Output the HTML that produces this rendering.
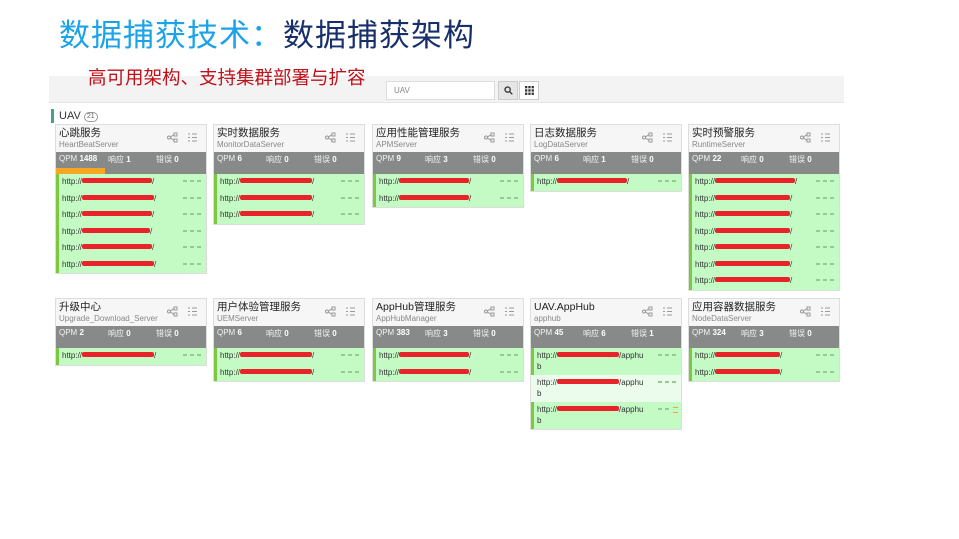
<!DOCTYPE html>
<html><head><meta charset="utf-8"><style>
*{margin:0;padding:0;box-sizing:border-box}
body{width:959px;height:539px;background:#fff;position:relative;overflow:hidden;font-family:"Liberation Sans","Noto Sans CJK SC",sans-serif}
.t1{position:absolute;left:59px;top:10px;font-size:31px;color:#1aa3e8;letter-spacing:1px;white-space:nowrap}
.t1 b{font-weight:normal;color:#17306b}
.t2{position:absolute;left:88px;top:64px;font-size:18.5px;color:#c0101a;white-space:nowrap;z-index:2}
.bar{position:absolute;left:49px;top:76px;width:795px;height:27px;background:#f3f3f3;border-bottom:1px solid #e6e6e6}
.search{position:absolute;left:386px;top:81px;width:109px;height:19px;background:#fff;border:1px solid #ddd;font-size:8px;color:#888;padding:4px 7px}
.btn{position:absolute;top:81px;width:20px;height:19px;border:1px solid #ccc;background:#fff}
.btn svg{position:absolute;left:5px;top:4px}
.uav{position:absolute;left:51px;top:109px;border-left:3px solid #4a9e8e;padding-left:5px;font-size:11px;color:#333;height:14px;line-height:14px}
.uav span{display:inline-block;border:1px solid #999;border-radius:6px;font-size:7px;line-height:8px;padding:0 2px;color:#666;vertical-align:1px}
.card{position:absolute;width:152px;border:1px solid #ddd;background:#fff}
.hd{height:27px;background:#f6f6f6;position:relative;padding:2px 0 0 3px}
.hd .n{font-size:10.5px;color:#222;line-height:13px;white-space:nowrap}
.hd .s{font-size:8px;color:#888;line-height:10px}
.ic{position:absolute;top:7px;width:11px;height:11px}
.st{height:22px;background:#888a89;position:relative;font-size:8px;color:#f2f2f2;padding:2px 0 0 3px}
.st i{font-style:normal;position:absolute;top:2px}
.st b{color:#fff}
.ob{position:absolute;left:0;bottom:0;height:6px;background:#f5a623}
.r{height:16.5px;background:#c4fac4;border-left:3px solid #7cc840;position:relative;font-size:8px;color:#333;padding:3px 0 0 3px;white-space:nowrap}
.r.l{background:#ecfcec;border-left-color:#ecfcec}
.r.tall{height:27px;line-height:11px;padding-top:2px}
.red{display:inline-block;height:5px;background:#e8242a;border-radius:2px;vertical-align:1px}
.d{position:absolute;right:3px;top:6px;width:20px;height:2px;background:repeating-linear-gradient(90deg,#8fce8f 0 4px,transparent 4px 7px)}
.d.o{background:repeating-linear-gradient(90deg,#8fce8f 0 4px,transparent 4px 7px);width:14px;right:9px}
.d.o:after{content:"";position:absolute;left:15px;top:-1px;width:5px;height:4px;border-top:1px solid #f5a623;border-bottom:1px solid #f5a623}
</style></head><body>
<div class="t1">数据捕获技术：<b>数据捕获架构</b></div>
<div class="bar"></div>
<div class="t2">高可用架构、支持集群部署与扩容</div>
<div class="search">UAV</div>
<div class="btn" style="left:498px;background:#e6e6e6"><svg width="9" height="9" viewBox="0 0 9 9" fill="none" stroke="#333" stroke-width="1.3"><circle cx="3.6" cy="3.6" r="2.6"/><path d="M5.5 5.5L8.3 8.3"/></svg></div>
<div class="btn" style="left:519px"><svg width="9" height="9" viewBox="0 0 9 9" fill="#333"><rect x="0" y="0" width="2.3" height="2.3"/><rect x="3.3" y="0" width="2.3" height="2.3"/><rect x="6.6" y="0" width="2.3" height="2.3"/><rect x="0" y="3.3" width="2.3" height="2.3"/><rect x="3.3" y="3.3" width="2.3" height="2.3"/><rect x="6.6" y="3.3" width="2.3" height="2.3"/><rect x="0" y="6.6" width="2.3" height="2.3"/><rect x="3.3" y="6.6" width="2.3" height="2.3"/><rect x="6.6" y="6.6" width="2.3" height="2.3"/></svg></div>
<div class="uav">UAV <span>21</span></div>

<div class="card" style="left:55px;top:124px">
<div class="hd"><div class="n">心跳服务</div><div class="s">HeartBeatServer</div>
<svg class="ic" style="left:111px" viewBox="0 0 11 11" fill="none" stroke="#999"><circle cx="2" cy="5.5" r="1.5"/><rect x="7" y="1" width="3" height="3"/><rect x="7" y="7" width="3" height="3"/><path d="M3.5 5L7 2.5M3.5 6L7 8.5"/></svg>
<svg class="ic" style="left:131px" viewBox="0 0 11 11" fill="none" stroke="#999"><path d="M1 2h2M5 2h5M1 5.5h2M5 5.5h5M1 9h2M5 9h5"/></svg></div>
<div class="st">QPM <b>1488</b><i style="left:52px">响应 <b>1</b></i><i style="left:100px">错误 <b>0</b></i><div class="ob" style="width:49px"></div></div>
<div class="r">http://<span class="red" style="width:70px"></span>/<span class="d"></span></div>
<div class="r">http://<span class="red" style="width:72px"></span>/<span class="d"></span></div>
<div class="r">http://<span class="red" style="width:70px"></span>/<span class="d"></span></div>
<div class="r">http://<span class="red" style="width:68px"></span>/<span class="d"></span></div>
<div class="r">http://<span class="red" style="width:70px"></span>/<span class="d"></span></div>
<div class="r">http://<span class="red" style="width:72px"></span>/<span class="d"></span></div>
</div>

<div class="card" style="left:213px;top:124px">
<div class="hd"><div class="n">实时数据服务</div><div class="s">MonitorDataServer</div>
<svg class="ic" style="left:111px" viewBox="0 0 11 11" fill="none" stroke="#999"><circle cx="2" cy="5.5" r="1.5"/><rect x="7" y="1" width="3" height="3"/><rect x="7" y="7" width="3" height="3"/><path d="M3.5 5L7 2.5M3.5 6L7 8.5"/></svg>
<svg class="ic" style="left:131px" viewBox="0 0 11 11" fill="none" stroke="#999"><path d="M1 2h2M5 2h5M1 5.5h2M5 5.5h5M1 9h2M5 9h5"/></svg></div>
<div class="st">QPM <b>6</b><i style="left:52px">响应 <b>0</b></i><i style="left:100px">错误 <b>0</b></i></div>
<div class="r">http://<span class="red" style="width:72px"></span>/<span class="d"></span></div>
<div class="r">http://<span class="red" style="width:72px"></span>/<span class="d"></span></div>
<div class="r">http://<span class="red" style="width:72px"></span>/<span class="d"></span></div>
</div>

<div class="card" style="left:372px;top:124px">
<div class="hd"><div class="n">应用性能管理服务</div><div class="s">APMServer</div>
<svg class="ic" style="left:111px" viewBox="0 0 11 11" fill="none" stroke="#999"><circle cx="2" cy="5.5" r="1.5"/><rect x="7" y="1" width="3" height="3"/><rect x="7" y="7" width="3" height="3"/><path d="M3.5 5L7 2.5M3.5 6L7 8.5"/></svg>
<svg class="ic" style="left:131px" viewBox="0 0 11 11" fill="none" stroke="#999"><path d="M1 2h2M5 2h5M1 5.5h2M5 5.5h5M1 9h2M5 9h5"/></svg></div>
<div class="st">QPM <b>9</b><i style="left:52px">响应 <b>3</b></i><i style="left:100px">错误 <b>0</b></i></div>
<div class="r">http://<span class="red" style="width:70px"></span>/<span class="d"></span></div>
<div class="r">http://<span class="red" style="width:70px"></span>/<span class="d"></span></div>
</div>

<div class="card" style="left:530px;top:124px">
<div class="hd"><div class="n">日志数据服务</div><div class="s">LogDataServer</div>
<svg class="ic" style="left:111px" viewBox="0 0 11 11" fill="none" stroke="#999"><circle cx="2" cy="5.5" r="1.5"/><rect x="7" y="1" width="3" height="3"/><rect x="7" y="7" width="3" height="3"/><path d="M3.5 5L7 2.5M3.5 6L7 8.5"/></svg>
<svg class="ic" style="left:131px" viewBox="0 0 11 11" fill="none" stroke="#999"><path d="M1 2h2M5 2h5M1 5.5h2M5 5.5h5M1 9h2M5 9h5"/></svg></div>
<div class="st">QPM <b>6</b><i style="left:52px">响应 <b>1</b></i><i style="left:100px">错误 <b>0</b></i></div>
<div class="r">http://<span class="red" style="width:70px"></span>/<span class="d"></span></div>
</div>

<div class="card" style="left:688px;top:124px">
<div class="hd"><div class="n">实时预警服务</div><div class="s">RuntimeServer</div>
<svg class="ic" style="left:111px" viewBox="0 0 11 11" fill="none" stroke="#999"><circle cx="2" cy="5.5" r="1.5"/><rect x="7" y="1" width="3" height="3"/><rect x="7" y="7" width="3" height="3"/><path d="M3.5 5L7 2.5M3.5 6L7 8.5"/></svg>
<svg class="ic" style="left:131px" viewBox="0 0 11 11" fill="none" stroke="#999"><path d="M1 2h2M5 2h5M1 5.5h2M5 5.5h5M1 9h2M5 9h5"/></svg></div>
<div class="st">QPM <b>22</b><i style="left:52px">响应 <b>0</b></i><i style="left:100px">错误 <b>0</b></i></div>
<div class="r">http://<span class="red" style="width:80px"></span>/<span class="d"></span></div>
<div class="r">http://<span class="red" style="width:75px"></span>/<span class="d"></span></div>
<div class="r">http://<span class="red" style="width:75px"></span>/<span class="d"></span></div>
<div class="r">http://<span class="red" style="width:75px"></span>/<span class="d"></span></div>
<div class="r">http://<span class="red" style="width:75px"></span>/<span class="d"></span></div>
<div class="r">http://<span class="red" style="width:75px"></span>/<span class="d"></span></div>
<div class="r">http://<span class="red" style="width:75px"></span>/<span class="d"></span></div>
</div>

<div class="card" style="left:55px;top:298px">
<div class="hd"><div class="n">升级中心</div><div class="s">Upgrade_Download_Server</div>
<svg class="ic" style="left:111px" viewBox="0 0 11 11" fill="none" stroke="#999"><circle cx="2" cy="5.5" r="1.5"/><rect x="7" y="1" width="3" height="3"/><rect x="7" y="7" width="3" height="3"/><path d="M3.5 5L7 2.5M3.5 6L7 8.5"/></svg>
<svg class="ic" style="left:131px" viewBox="0 0 11 11" fill="none" stroke="#999"><path d="M1 2h2M5 2h5M1 5.5h2M5 5.5h5M1 9h2M5 9h5"/></svg></div>
<div class="st">QPM <b>2</b><i style="left:52px">响应 <b>0</b></i><i style="left:100px">错误 <b>0</b></i></div>
<div class="r">http://<span class="red" style="width:72px"></span>/<span class="d"></span></div>
</div>

<div class="card" style="left:213px;top:298px">
<div class="hd"><div class="n">用户体验管理服务</div><div class="s">UEMServer</div>
<svg class="ic" style="left:111px" viewBox="0 0 11 11" fill="none" stroke="#999"><circle cx="2" cy="5.5" r="1.5"/><rect x="7" y="1" width="3" height="3"/><rect x="7" y="7" width="3" height="3"/><path d="M3.5 5L7 2.5M3.5 6L7 8.5"/></svg>
<svg class="ic" style="left:131px" viewBox="0 0 11 11" fill="none" stroke="#999"><path d="M1 2h2M5 2h5M1 5.5h2M5 5.5h5M1 9h2M5 9h5"/></svg></div>
<div class="st">QPM <b>6</b><i style="left:52px">响应 <b>0</b></i><i style="left:100px">错误 <b>0</b></i></div>
<div class="r">http://<span class="red" style="width:72px"></span>/<span class="d"></span></div>
<div class="r">http://<span class="red" style="width:72px"></span>/<span class="d"></span></div>
</div>

<div class="card" style="left:372px;top:298px">
<div class="hd"><div class="n">AppHub管理服务</div><div class="s">AppHubManager</div>
<svg class="ic" style="left:111px" viewBox="0 0 11 11" fill="none" stroke="#999"><circle cx="2" cy="5.5" r="1.5"/><rect x="7" y="1" width="3" height="3"/><rect x="7" y="7" width="3" height="3"/><path d="M3.5 5L7 2.5M3.5 6L7 8.5"/></svg>
<svg class="ic" style="left:131px" viewBox="0 0 11 11" fill="none" stroke="#999"><path d="M1 2h2M5 2h5M1 5.5h2M5 5.5h5M1 9h2M5 9h5"/></svg></div>
<div class="st">QPM <b>383</b><i style="left:52px">响应 <b>3</b></i><i style="left:100px">错误 <b>0</b></i></div>
<div class="r">http://<span class="red" style="width:70px"></span>/<span class="d"></span></div>
<div class="r">http://<span class="red" style="width:70px"></span>/<span class="d"></span></div>
</div>

<div class="card" style="left:530px;top:298px">
<div class="hd"><div class="n">UAV.AppHub</div><div class="s">apphub</div>
<svg class="ic" style="left:111px" viewBox="0 0 11 11" fill="none" stroke="#999"><circle cx="2" cy="5.5" r="1.5"/><rect x="7" y="1" width="3" height="3"/><rect x="7" y="7" width="3" height="3"/><path d="M3.5 5L7 2.5M3.5 6L7 8.5"/></svg>
<svg class="ic" style="left:131px" viewBox="0 0 11 11" fill="none" stroke="#999"><path d="M1 2h2M5 2h5M1 5.5h2M5 5.5h5M1 9h2M5 9h5"/></svg></div>
<div class="st">QPM <b>45</b><i style="left:52px">响应 <b>6</b></i><i style="left:100px">错误 <b>1</b></i></div>
<div class="r tall">http://<span class="red" style="width:62px"></span>/apphu<br>b<span class="d"></span></div>
<div class="r tall l">http://<span class="red" style="width:62px"></span>/apphu<br>b<span class="d"></span></div>
<div class="r tall">http://<span class="red" style="width:62px"></span>/apphu<br>b<span class="d o"></span></div>
</div>

<div class="card" style="left:688px;top:298px">
<div class="hd"><div class="n">应用容器数据服务</div><div class="s">NodeDataServer</div>
<svg class="ic" style="left:111px" viewBox="0 0 11 11" fill="none" stroke="#999"><circle cx="2" cy="5.5" r="1.5"/><rect x="7" y="1" width="3" height="3"/><rect x="7" y="7" width="3" height="3"/><path d="M3.5 5L7 2.5M3.5 6L7 8.5"/></svg>
<svg class="ic" style="left:131px" viewBox="0 0 11 11" fill="none" stroke="#999"><path d="M1 2h2M5 2h5M1 5.5h2M5 5.5h5M1 9h2M5 9h5"/></svg></div>
<div class="st">QPM <b>324</b><i style="left:52px">响应 <b>3</b></i><i style="left:100px">错误 <b>0</b></i></div>
<div class="r">http://<span class="red" style="width:65px"></span>/<span class="d"></span></div>
<div class="r">http://<span class="red" style="width:65px"></span>/<span class="d"></span></div>
</div>
</body></html>
